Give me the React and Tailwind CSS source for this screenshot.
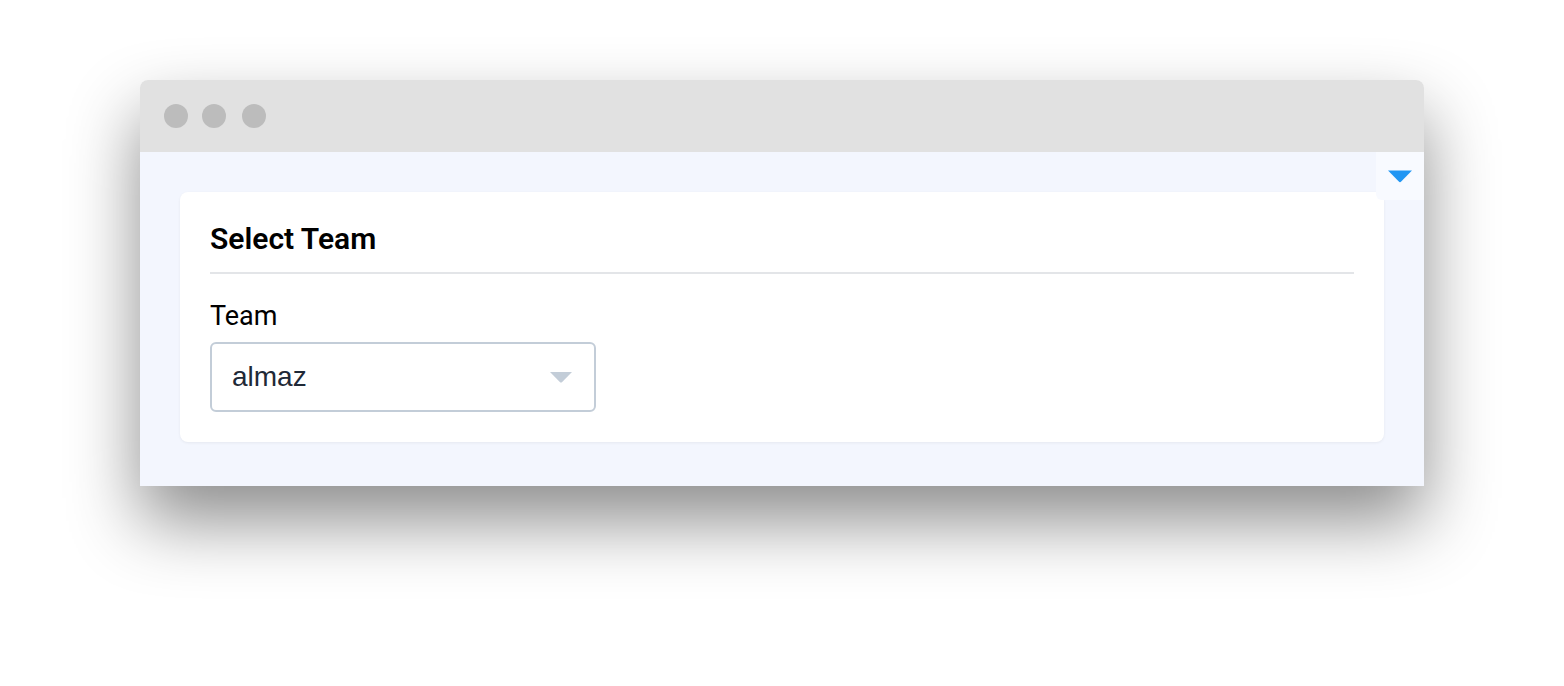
export default function App() {
  return (
    <div className="w-[1564px] h-[686px] bg-white pt-[80px] pl-[140px]" style={{ fontFamily: "Roboto, 'Liberation Sans', sans-serif" }}>
      <div className="w-[1284px] shadow-[0_35px_70px_rgba(0,0,0,0.45)] rounded-t-[8px]">
        <div className="h-[72px] bg-[#e1e1e1] rounded-t-[8px] flex items-center gap-[14px] pl-[24px]">
          <span className="w-[24px] h-[24px] rounded-full bg-[#bcbcbc]" />
          <span className="w-[24px] h-[24px] rounded-full bg-[#bcbcbc]" />
          <span className="w-[24px] h-[24px] rounded-full bg-[#bcbcbc] ml-[2px]" />
        </div>
        <div className="relative bg-[#f3f6fe] h-[334px] px-[40px] pt-[40px]">
          <div className="absolute right-0 top-0 w-[48px] h-[48px] bg-[#f8faff] rounded-bl-[6px] flex items-center justify-center">
            <svg width="26" height="14" viewBox="0 0 26 14">
              <path d="M1 1.5 H25 L14.2 12.6 Q13 13.8 11.8 12.6 Z" fill="#2196f3" />
            </svg>
          </div>
          <div className="bg-white rounded-[8px] shadow-[0_1px_3px_rgba(0,0,0,0.06)] h-[250px] px-[30px] pt-[30px]">
            <h2 className="text-[30px] font-semibold text-black leading-[34px]">Select Team</h2>
            <div className="h-[2px] bg-[#e3e5e8] mt-[16px]" />
            <div className="text-[27px] text-black leading-[30px] mt-[27px]">Team</div>
            <div className="mt-[11px] w-[386px] h-[70px] border-2 border-[#c3cdd8] rounded-[6px] flex items-center justify-between pl-[20px] pr-[22px]">
              <span className="text-[28px] text-[#1f2937]" style={{ fontFamily: "'Liberation Sans', Arial, sans-serif" }}>almaz</span>
              <svg width="22" height="11" viewBox="0 0 22 11">
                <path d="M0 0 H22 L12.2 10 Q11 11.2 9.8 10 Z" fill="#c3cdd8" />
              </svg>
            </div>
          </div>
        </div>
      </div>
    </div>
  );
}
